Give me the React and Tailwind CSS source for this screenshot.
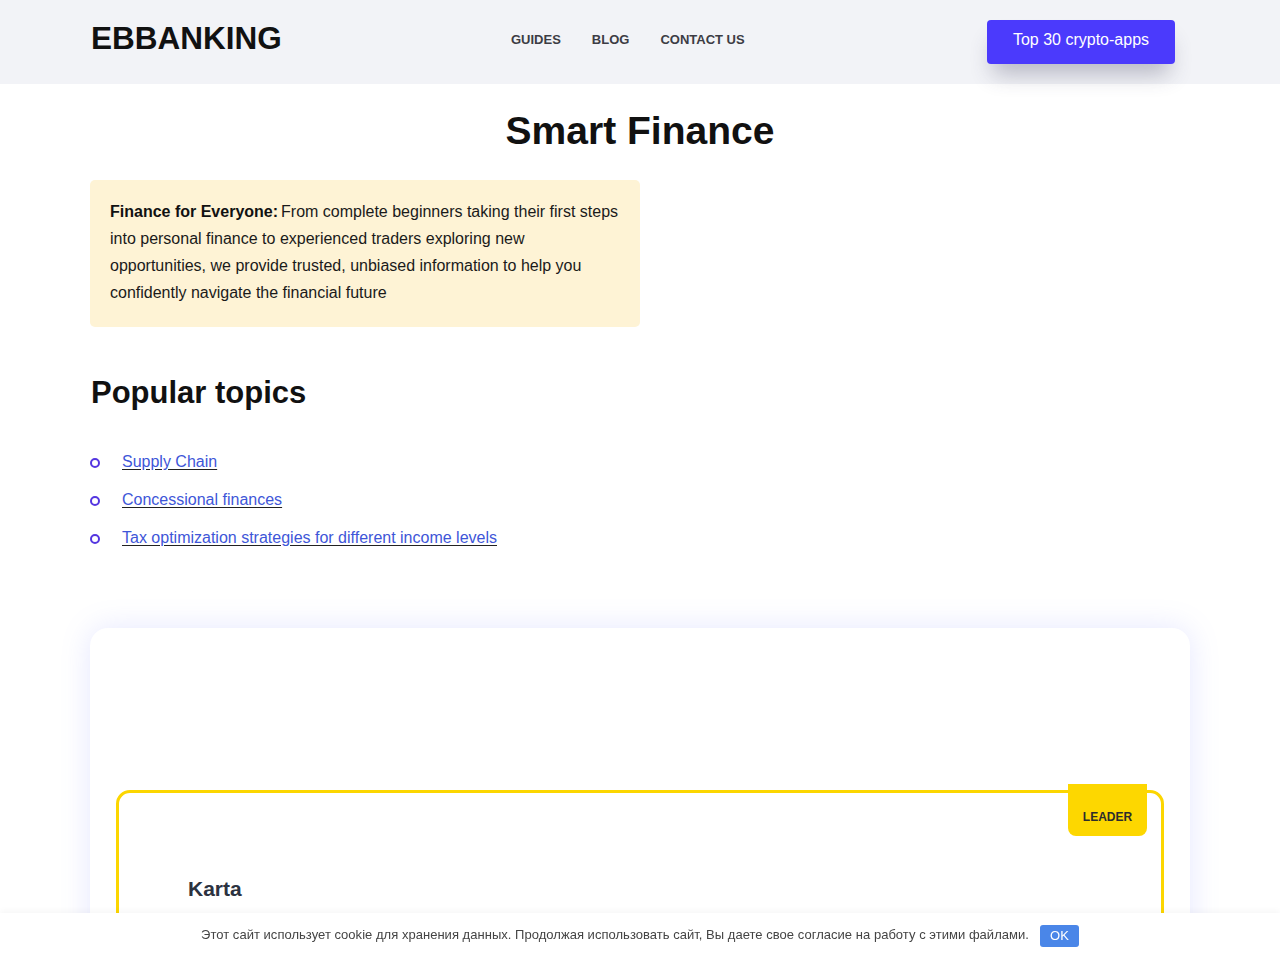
import React from "react";

const topics = [
  "Supply Chain",
  "Concessional finances",
  "Tax optimization strategies for different income levels",
];

export default function App() {
  return (
    <div className="min-h-screen bg-white font-['Liberation_Sans',Arial,sans-serif] text-[#111]">
      <header className="bg-[#f2f3f7] h-[84px]">
        <div className="max-w-[1100px] mx-auto h-full flex items-center">
          <a className="w-[421px] text-[31.5px] font-bold text-[#111] pb-[6px] pl-[1px]">EBBANKING</a>
          <nav className="flex items-center gap-[31px] text-[13px] font-bold text-[#3c3c44] pb-[5px]">
            <a>GUIDES</a>
            <a>BLOG</a>
            <a>CONTACT US</a>
          </nav>
          <button className="ml-auto mr-[15px] mb-[1px] w-[188px] h-[44px] rounded-[4px] bg-[#4b3afc] text-white text-[16px] shadow-[0_16px_22px_-6px_rgba(60,60,90,0.32)] pb-[3px]">
            Top 30 crypto-apps
          </button>
        </div>
      </header>

      <main className="max-w-[1100px] mx-auto pb-[80px]">
        <h1 className="text-center text-[39px] font-bold pt-[23px] leading-[48px]">Smart Finance</h1>

        <div className="mt-[25px] w-[550px] rounded-[5px] bg-[#fef3d5] px-[20px] pt-[18px] pb-[21px] text-[16px] leading-[27px] text-[#1a1a1a]">
          <b className="font-bold text-[#111] mr-[3px]">Finance for Everyone:</b>From complete beginners taking their first steps
          into personal finance to experienced traders exploring new opportunities, we provide trusted, unbiased
          information to help you confidently navigate the financial future
        </div>

        <h2 className="mt-[46px] text-[31px] font-bold leading-[40px] pl-[1px]">Popular topics</h2>

        <ul className="mt-[39px] flex flex-col gap-[18px]">
          {topics.map((t) => (
            <li key={t} className="flex items-center h-[20px]">
              <span className="w-[10px] h-[10px] rounded-full border-2 border-[#5436e0] mr-[22px] mt-[2px]"></span>
              <a className="text-[16px] text-[#3e56d8] underline underline-offset-[2px] decoration-[#222]">{t}</a>
            </li>
          ))}
        </ul>

        <section className="mt-[80px] rounded-[18px] bg-white shadow-[0_0_30px_rgba(110,120,255,0.18)] px-[26px] pt-[162px] pb-[40px]">
          <div className="relative rounded-[14px] border-[3px] border-[#fcd600] h-[300px] px-[69px] pt-[80px]">
            <span className="absolute right-[14px] top-[-9px] w-[79px] h-[52px] rounded-b-[8px] bg-[#fdd700] flex items-center justify-center pt-[14px] text-[12px] font-bold text-[#2c2c2c]">
              LEADER
            </span>
            <h3 className="text-[21px] font-bold text-[#2b3240]">Karta</h3>
          </div>
        </section>
      </main>

      <div className="fixed bottom-0 left-0 right-0 h-[47px] bg-white shadow-[0_-2px_6px_rgba(0,0,0,0.04)] flex items-center justify-center gap-[11px]">
        <span className="text-[13px] text-[#444] tracking-[0.03px] pb-[3px]">
          Этот сайт использует cookie для хранения данных. Продолжая использовать сайт, Вы даете свое согласие на работу с этими файлами.
        </span>
        <button className="w-[39px] h-[22px] rounded-[3px] bg-[#4a86e8] text-white text-[13px] leading-[22px] pb-[4px] mb-[1px]">OK</button>
      </div>
    </div>
  );
}
